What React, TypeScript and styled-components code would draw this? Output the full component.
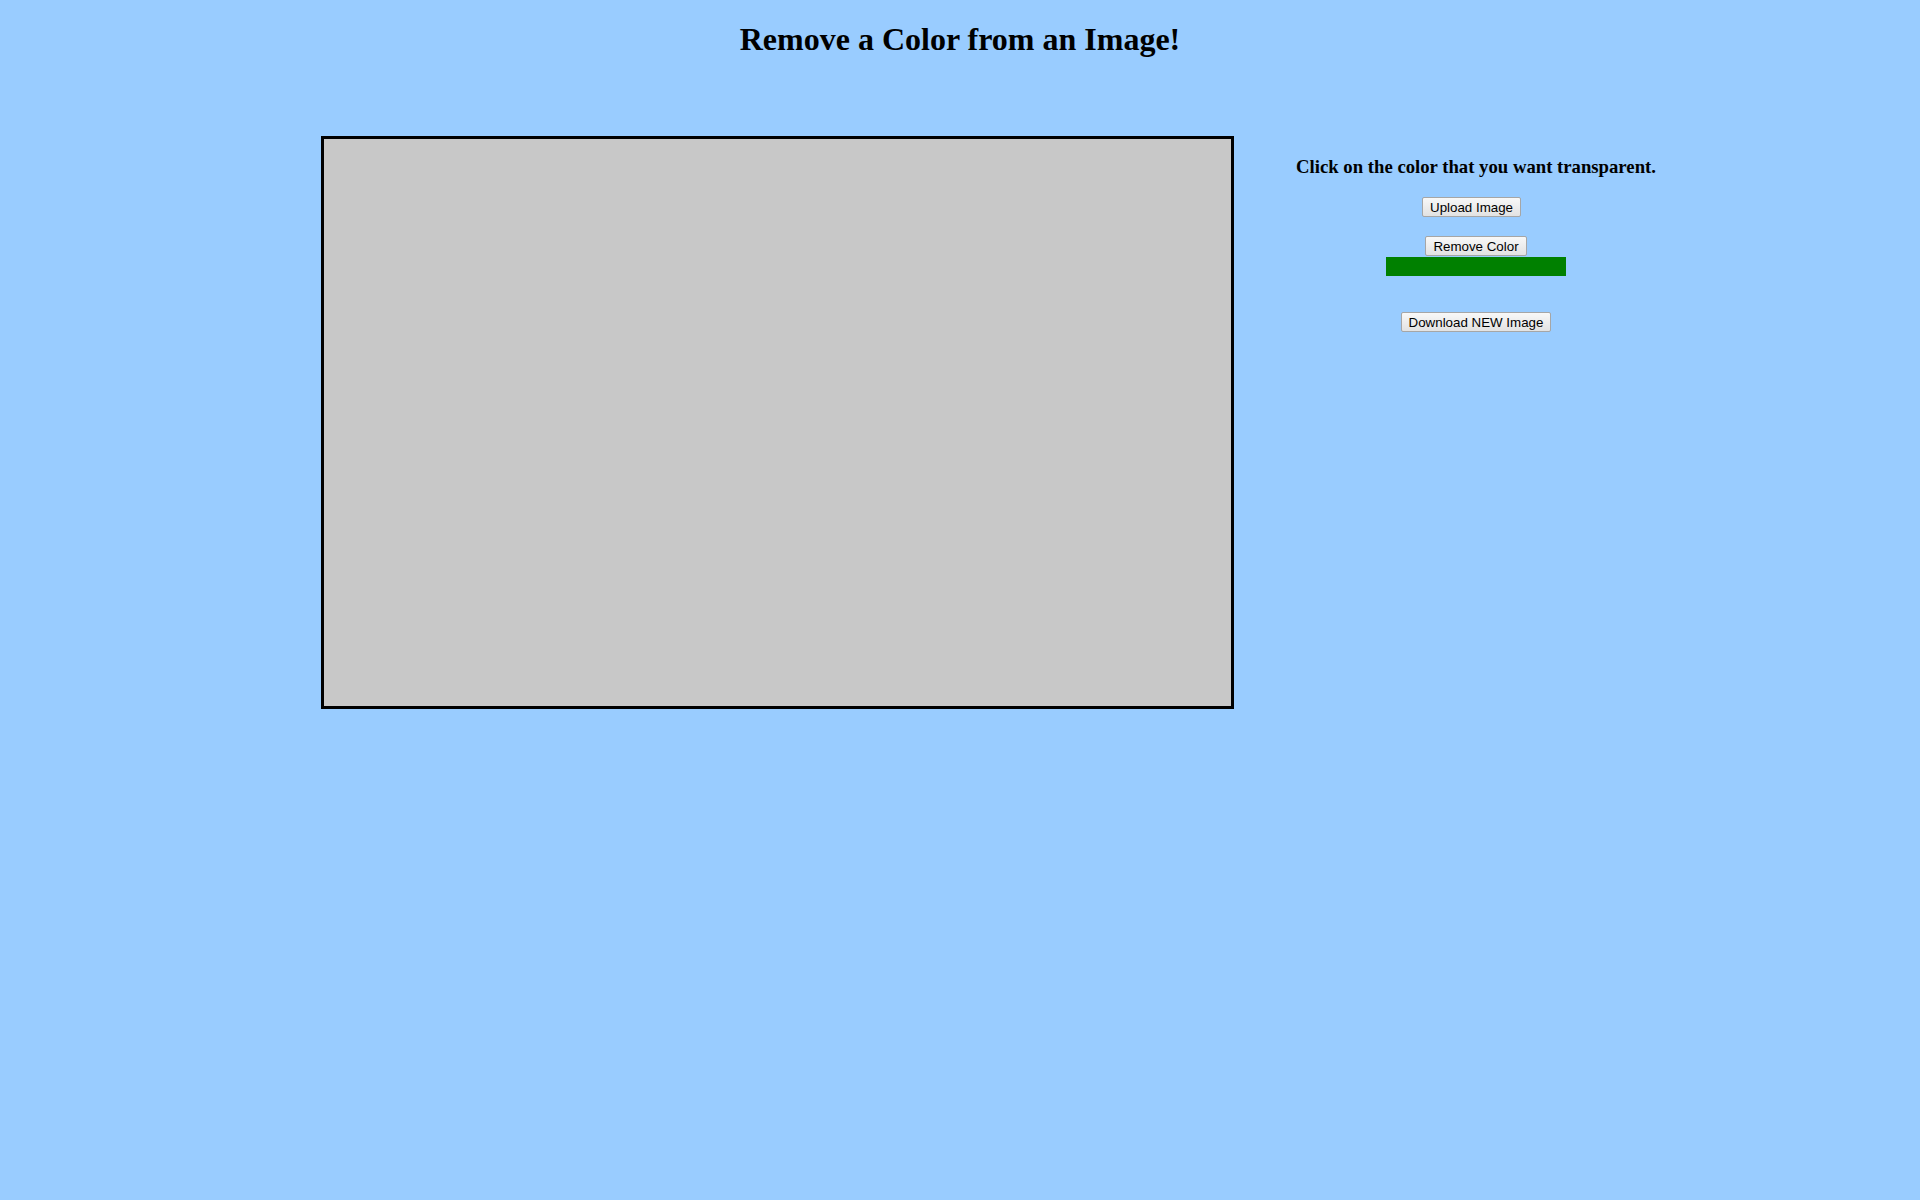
import React from "react";
import styled, { createGlobalStyle } from "styled-components";

const GlobalStyle = createGlobalStyle`
  html, body {
    margin: 0;
    padding: 0;
    background: #99ccff;
  }
  body {
    font-family: "Liberation Serif", "Times New Roman", serif;
    color: #000;
  }
`;

const Page = styled.div`
  width: 1920px;
  min-height: 1200px;
  padding-top: 21px;
  box-sizing: border-box;
`;

const Title = styled.h1`
  margin: 0;
  font-family: "Liberation Serif", "Times New Roman", serif;
  font-size: 32px;
  font-weight: bold;
  line-height: 37px;
  text-align: center;
`;

const Workspace = styled.div`
  display: flex;
  align-items: flex-start;
  margin-top: 78px;
  padding-left: 321px;
`;

const Canvas = styled.div`
  width: 907px;
  height: 567px;
  border: 3px solid #000;
  background: #c8c8c8;
  flex-shrink: 0;
`;

const Panel = styled.div`
  width: 484px;
  display: flex;
  flex-direction: column;
  align-items: center;
  padding-top: 20px;
`;

const Instruction = styled.h3`
  margin: 0;
  font-family: "Liberation Serif", "Times New Roman", serif;
  font-size: 18.72px;
  font-weight: bold;
  line-height: 21px;
  white-space: nowrap;
`;

const Button = styled.button<{ $top: number; $shift?: number }>`
  margin-top: ${(p) => p.$top}px;
  margin-right: ${(p) => (p.$shift ? p.$shift : 0)}px;
  height: 20px;
  box-sizing: border-box;
  padding: 1px 7px 0;
  font-family: "Liberation Sans", Arial, sans-serif;
  font-size: 13.33px;
  line-height: 17px;
  color: #000;
  background: linear-gradient(#f8f8f8, #e2e2e2);
  border: 1px solid #a6a6a6;
  border-radius: 2px;
  cursor: default;
`;

const Swatch = styled.div<{ $color: string }>`
  margin-top: 1px;
  width: 180px;
  height: 19px;
  background: ${(p) => p.$color};
`;

export default function App() {
  return (
    <>
      <GlobalStyle />
      <Page>
        <Title>Remove a Color from an Image!</Title>
        <Workspace>
          <Canvas />
          <Panel>
            <Instruction>Click on the color that you want transparent.</Instruction>
            <Button $top={20} $shift={9}>Upload Image</Button>
            <Button $top={19}>Remove Color</Button>
            <Swatch $color="#008000" />
            <Button $top={36}>Download NEW Image</Button>
          </Panel>
        </Workspace>
      </Page>
    </>
  );
}
